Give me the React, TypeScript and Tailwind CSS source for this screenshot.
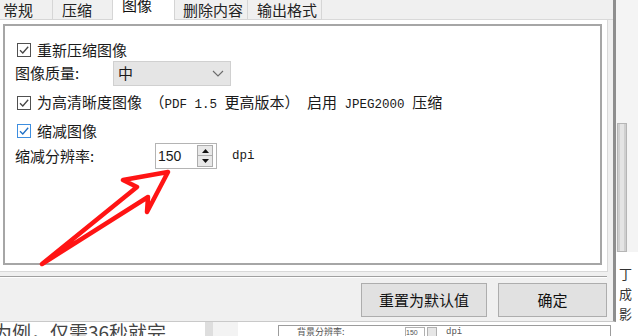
import type { ReactNode } from 'react';

const mono = "font-['Liberation_Mono','Noto_Sans_CJK_SC',monospace] text-[12.5px]";

function Check({ blue }: { blue?: boolean }) {
    return (
        <span className={`flex h-[14px] w-[14px] shrink-0 items-center justify-center border bg-white ${blue ? 'border-[#3d8ee0]' : 'border-[#505050]'}`}>
            <svg width="12" height="12" viewBox="0 0 12 12">
                <path d="M2 6.2 L4.8 9 L10.2 2.8" fill="none" stroke={blue ? '#1f6fc5' : '#454545'} strokeWidth="1.3" />
            </svg>
        </span>
    );
}

function CheckRow({ blue, children, className }: { blue?: boolean; children: ReactNode; className: string }) {
    return (
        <div className={`flex h-[20px] items-center gap-[6px] pl-[12px] leading-[20px] ${className}`}>
            <Check blue={blue} />
            <span className="whitespace-pre">{children}</span>
        </div>
    );
}

const tabs = [
    { label: '常规', w: 'w-[53px] pl-[3px]' },
    { label: '压缩', w: 'w-[60px] pl-[9px]' },
    { label: '图像', w: 'w-[62px] pl-[9px]', active: true },
    { label: '删除内容', w: 'w-[73px] pl-[8px]' },
    { label: '输出格式', w: 'w-[74px] pl-[9px]' },
];

export default function App() {
    return (
        <div className="relative flex h-[336px] w-[638px] overflow-hidden bg-white font-['Noto_Sans_CJK_SC',sans-serif] text-[15px] text-[#1a1a1a]">
            <div className="flex w-[616px] shrink-0 flex-col">
                {/* dialog */}
                <div className="flex h-[322px] flex-col border-r-[3px] border-b border-r-[#8e8e8e] border-b-[#c9c9c9] bg-[#f0f0f0]">
                    <div className="flex h-[20px]">
                        {tabs.map((t) =>
                            t.active ? (
                                <div key={t.label} className={`${t.w} flex items-start border-r border-[#d4d4d4] bg-white leading-[10px] text-[#111]`}>
                                    {t.label}
                                </div>
                            ) : (
                                <div key={t.label} className={`${t.w} border-r border-b border-[#d6d6d6] leading-[19px] text-[#222]`}>
                                    {t.label}
                                </div>
                            )
                        )}
                        <div className="flex-1 border-b border-[#d9d9d9]" />
                    </div>

                    <div className="h-[252px] w-[608px] border-r border-b border-[#d9d9d9] bg-white pt-[4px] pl-[3px]">
                        <div className="flex h-[241px] w-[599px] flex-col border-2 border-[#a6a6a6] bg-white">
                            <CheckRow className="mt-[14px]">重新压缩图像</CheckRow>

                            <div className="mt-[1px] flex h-[25px] items-center pl-[10px]">
                                <span className="w-[98px]">图像质量:</span>
                                <div className="flex h-[25px] w-[118px] items-center justify-between border border-[#d0d0d0] bg-[#e5e5e5] pl-[4px] pr-[6px]">
                                    <span>中</span>
                                    <svg width="12" height="7" viewBox="0 0 12 7">
                                        <path d="M1 1 L6 6 L11 1" fill="none" stroke="#6b6b6b" strokeWidth="1.1" />
                                    </svg>
                                </div>
                            </div>

                            <CheckRow className="mt-[7px]">
                                为高清晰度图像<span className={mono}> </span>（<span className={mono}>PDF 1.5 </span>更高版本）<span className={mono}> </span>启用<span className={mono}> JPEG2000 </span>压缩
                            </CheckRow>

                            <CheckRow blue className="mt-[8px]">缩减图像</CheckRow>

                            <div className="mt-[2px] flex h-[26px] items-center pl-[10px]">
                                <span className="w-[140px]">缩减分辨率:</span>
                                <div className="flex h-[26px] w-[62px] items-center border border-[#b4b4b4] bg-white pr-[2px]">
                                    <span className="w-[41px] pl-[2px] font-['Liberation_Sans',sans-serif] text-[14px]">150</span>
                                    <div className="flex h-[22px] w-[16px] flex-col">
                                        <div className="flex h-[11px] items-center justify-center border border-[#adadad] bg-[#e8e8e8]">
                                            <svg width="7" height="4" viewBox="0 0 7 4"><path d="M0 4 L3.5 0 L7 4 Z" fill="#111" /></svg>
                                        </div>
                                        <div className="flex h-[11px] items-center justify-center border border-t-0 border-[#adadad] bg-[#e8e8e8]">
                                            <svg width="7" height="4" viewBox="0 0 7 4"><path d="M0 0 L3.5 4 L7 0 Z" fill="#111" /></svg>
                                        </div>
                                    </div>
                                </div>
                                <span className={`ml-[15px] ${mono}`}>dpi</span>
                            </div>
                        </div>
                    </div>

                    <div className="mt-[4px] h-px w-[607px] bg-[#a0a0a0]" />
                    <div className="h-px w-[607px] bg-white" />

                    <div className="mt-[5px] flex justify-end gap-[11px] pr-[6px]">
                        <button className="h-[34px] w-[126px] border border-[#adadad] bg-[#e1e1e1] text-[#111]">重置为默认值</button>
                        <button className="h-[34px] w-[109px] border border-[#adadad] bg-[#e1e1e1] text-[#111]">确定</button>
                    </div>
                </div>

                {/* document behind the dialog */}
                <div className="flex h-[14px] overflow-hidden bg-white">
                    <span className="ml-[-7px] w-[212px] shrink-0 whitespace-nowrap text-[19px] leading-[20px] text-[#454545]">为例，仅需36秒就完</span>
                    <div className="w-[8px] shrink-0 bg-[#dedede]" />
                    <div className="w-[25px] shrink-0 bg-[#f3f3f3]" />
                    <div className="w-[40px] shrink-0" />
                    <div className="mt-[3px] flex w-[333px] shrink-0 items-start gap-0 border-t border-l border-r border-[#9c9c9c] pt-[1px] text-[9px] leading-[10px] text-[#555]">
                        <span className="ml-[18px] w-[108px]">背景分辨率:</span>
                        <span className="h-[10px] w-[20px] border border-[#b0b0b0] font-['Liberation_Sans',sans-serif] text-[7px]">150</span>
                        <span className="ml-[2px] h-[10px] w-[10px] border border-[#b0b0b0] bg-[#e6e6e6]" />
                        <span className="ml-[9px] font-['Liberation_Mono',monospace]">dpi</span>
                    </div>
                </div>
            </div>

            {/* right edge of the document */}
            <div className="flex w-[22px] flex-col bg-[#f4f4f4]">
                <div className="h-[123px]" />
                <div className="ml-[1px] flex h-[129px] w-[10px] justify-center border border-[#b5b5b5] bg-[#cfcfcf]">
                    <div className="w-[4px] bg-[#e4e4e4]" />
                </div>
                <div className="flex flex-1 flex-col gap-[5px] bg-white pt-[14px] pl-[3px] text-[13px] leading-[15px] text-[#333]">
                    <span>丁</span>
                    <span>成</span>
                    <span>影</span>
                </div>
            </div>

            {/* red annotation arrow */}
            <svg className="pointer-events-none absolute inset-0" width="638" height="336" viewBox="0 0 638 336">
                <polygon
                    points="42,264 137,187 123,180 168,172 147,212 148,197"
                    fill="none"
                    stroke="#ff1414"
                    strokeWidth="4.5"
                    strokeLinejoin="round"
                />
            </svg>
        </div>
    );
}
